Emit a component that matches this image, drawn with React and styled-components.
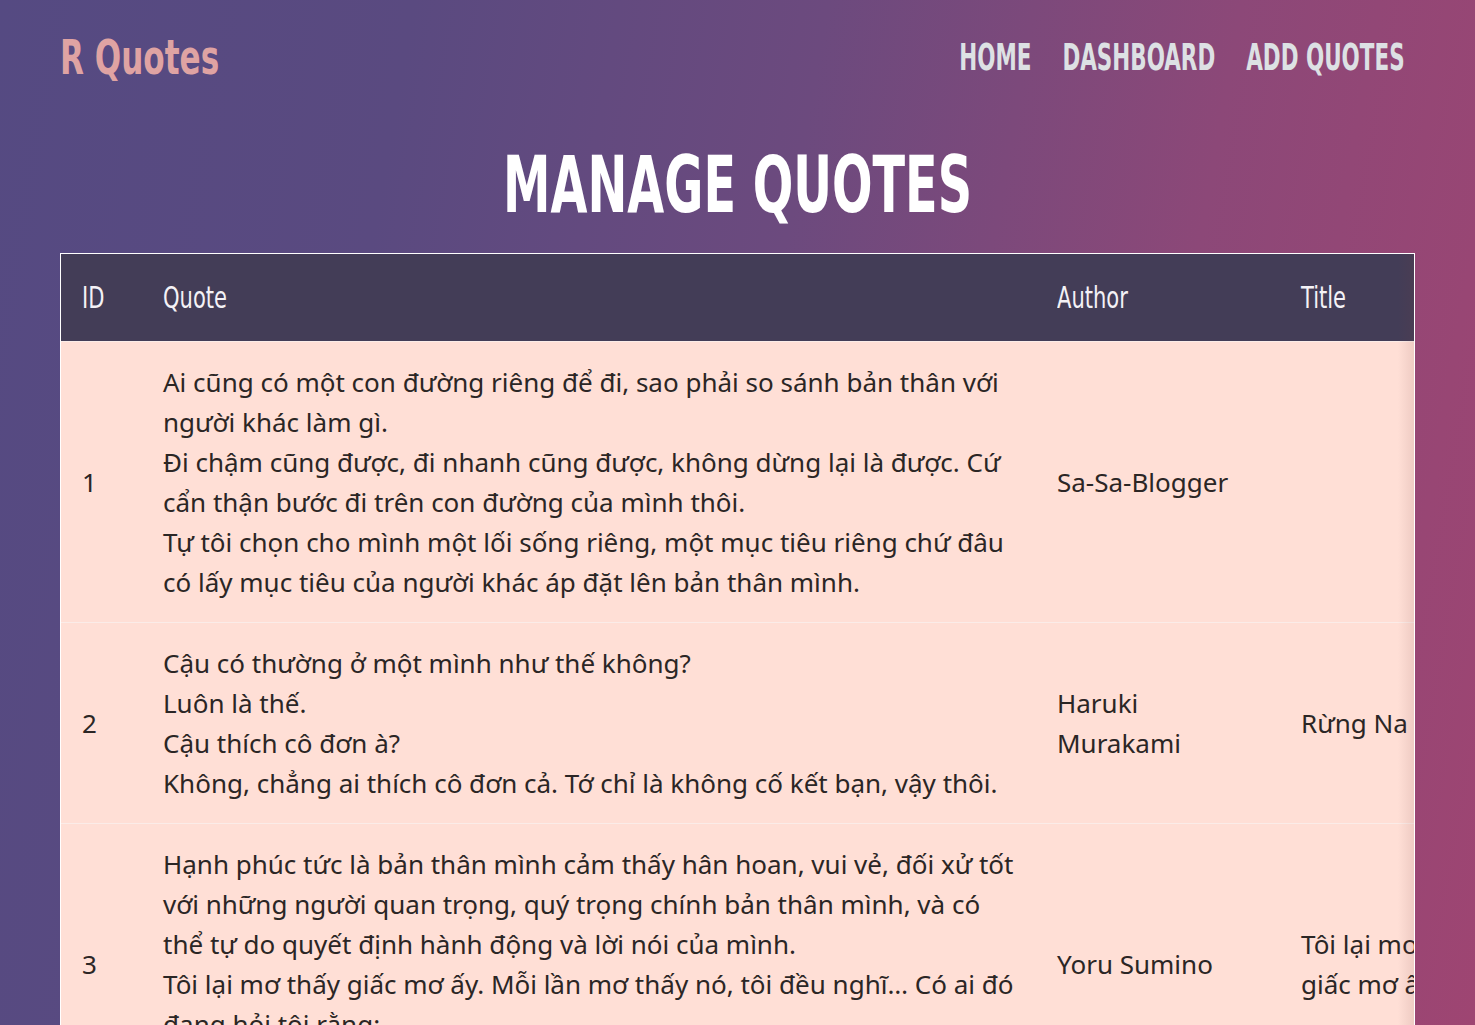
import React from "react";
import styled, { createGlobalStyle } from "styled-components";

const GlobalStyle = createGlobalStyle`
  html, body {
    margin: 0;
    padding: 0;
  }
  body {
    min-height: 100vh;
    font-family: "Noto Sans", "Open Sans", sans-serif;
    background: linear-gradient(100deg, #554a82 0%, #5a4a80 25%, #6c4a7e 50%, #8c4878 75%, #9e4572 100%);
    background-attachment: fixed;
  }
`;

// no condensed display face offline, so squeeze DejaVu Condensed a bit more
const DISPLAY = `"DejaVu Sans Condensed", "Liberation Sans Narrow", sans-serif`;

const Page = styled.div`
  min-height: 100vh;
  padding: 0 60px;
  box-sizing: border-box;
`;

const NavBar = styled.nav`
  height: 114px;
  display: flex;
  align-items: center;
  justify-content: space-between;
`;

const Logo = styled.a`
  display: inline-block;
  font-family: ${DISPLAY};
  font-weight: 700;
  font-size: 48px;
  line-height: 1;
  color: #dfa3a3;
  text-decoration: none;
  transform: scaleX(0.72);
  transform-origin: left center;
`;

const NavLinks = styled.ul`
  display: flex;
  gap: 48px;
  list-style: none;
  margin: 0 10px 0 0;
  padding: 0;
  transform: scaleX(0.645);
  transform-origin: right center;
`;

const NavLink = styled.a`
  font-family: ${DISPLAY};
  font-weight: 700;
  font-size: 37px;
  line-height: 1;
  color: #dde1e4;
  text-decoration: none;
  text-transform: uppercase;
`;

const Heading = styled.h1`
  margin: 0;
  padding: 32px 0 29px;
  text-align: center;
  font-family: ${DISPLAY};
  font-weight: 700;
  font-size: 78px;
  line-height: 1;
  color: #ffffff;
  text-transform: uppercase;
  transform: scaleX(0.68);
`;

const TableWrap = styled.div`
  border: 1px solid #ffffff;
  overflow: hidden;
  position: relative;

  &::after {
    content: "";
    position: absolute;
    top: 0;
    right: 0;
    bottom: 0;
    width: 16px;
    background: linear-gradient(to right, rgba(120, 60, 60, 0), rgba(120, 60, 60, 0.12));
    pointer-events: none;
  }
`;

const Table = styled.table`
  border-collapse: collapse;
  width: 1469px;
  table-layout: fixed;
`;

const HeadCell = styled.th`
  position: relative;
  box-sizing: border-box;
  height: 87px;
  padding: 0 21px;
  background: #433d57;
  color: #f4f2f6;
  font-family: ${DISPLAY};
  font-weight: 400;
  font-size: 30px;
  text-align: left;
  width: ${(p) => p.$w}px;

  & + &::before {
    content: "";
    position: absolute;
    left: 0;
    top: 20px;
    bottom: 20px;
    width: 1px;
    background: #3c3750;
  }
`;

const HeadLabel = styled.span`
  display: inline-block;
  transform: scaleX(0.78);
  transform-origin: left center;
`;

const Row = styled.tr`
  background: #ffdfd6;
  border-top: 1px solid #fbece8;
`;

const Cell = styled.td`
  padding: 20px 21px;
  font-size: 26px;
  line-height: 40px;
  color: #2b2625;
  vertical-align: middle;
`;

const columns = [
  { label: "ID", width: 81 },
  { label: "Quote", width: 894 },
  { label: "Author", width: 244 },
  { label: "Title", width: 250 },
];

const quotes = [
  {
    id: 1,
    lines: [
      "Ai cũng có một con đường riêng để đi, sao phải so sánh bản thân với người khác làm gì.",
      "Đi chậm cũng được, đi nhanh cũng được, không dừng lại là được. Cứ cẩn thận bước đi trên con đường của mình thôi.",
      "Tự tôi chọn cho mình một lối sống riêng, một mục tiêu riêng chứ đâu có lấy mục tiêu của người khác áp đặt lên bản thân mình.",
    ],
    author: "Sa-Sa-Blogger",
    title: "",
  },
  {
    id: 2,
    lines: [
      "Cậu có thường ở một mình như thế không?",
      "Luôn là thế.",
      "Cậu thích cô đơn à?",
      "Không, chẳng ai thích cô đơn cả. Tớ chỉ là không cố kết bạn, vậy thôi.",
    ],
    author: "Haruki Murakami",
    title: "Rừng Na Uy",
  },
  {
    id: 3,
    lines: [
      "Hạnh phúc tức là bản thân mình cảm thấy hân hoan, vui vẻ, đối xử tốt với những người quan trọng, quý trọng chính bản thân mình, và có thể tự do quyết định hành động và lời nói của mình.",
      "Tôi lại mơ thấy giấc mơ ấy. Mỗi lần mơ thấy nó, tôi đều nghĩ… Có ai đó đang hỏi tôi rằng:",
      "“Hạnh phúc là gì?”",
    ],
    author: "Yoru Sumino",
    title: "Tôi lại mơ thấy giấc mơ ấy",
  },
];

export default function App() {
  return (
    <>
      <GlobalStyle />
      <Page>
        <NavBar>
          <Logo href="#">R Quotes</Logo>
          <NavLinks>
            <li><NavLink href="#">Home</NavLink></li>
            <li><NavLink href="#">Dashboard</NavLink></li>
            <li><NavLink href="#">Add Quotes</NavLink></li>
          </NavLinks>
        </NavBar>

        <Heading>Manage Quotes</Heading>

        <TableWrap>
          <Table>
            <thead>
              <tr>
                {columns.map((col) => (
                  <HeadCell key={col.label} $w={col.width}>
                    <HeadLabel>{col.label}</HeadLabel>
                  </HeadCell>
                ))}
              </tr>
            </thead>
            <tbody>
              {quotes.map((q) => (
                <Row key={q.id}>
                  <Cell>{q.id}</Cell>
                  <Cell>
                    {q.lines.map((line, i) => (
                      <div key={i}>{line}</div>
                    ))}
                  </Cell>
                  <Cell>{q.author}</Cell>
                  <Cell>{q.title}</Cell>
                </Row>
              ))}
            </tbody>
          </Table>
        </TableWrap>
      </Page>
    </>
  );
}
